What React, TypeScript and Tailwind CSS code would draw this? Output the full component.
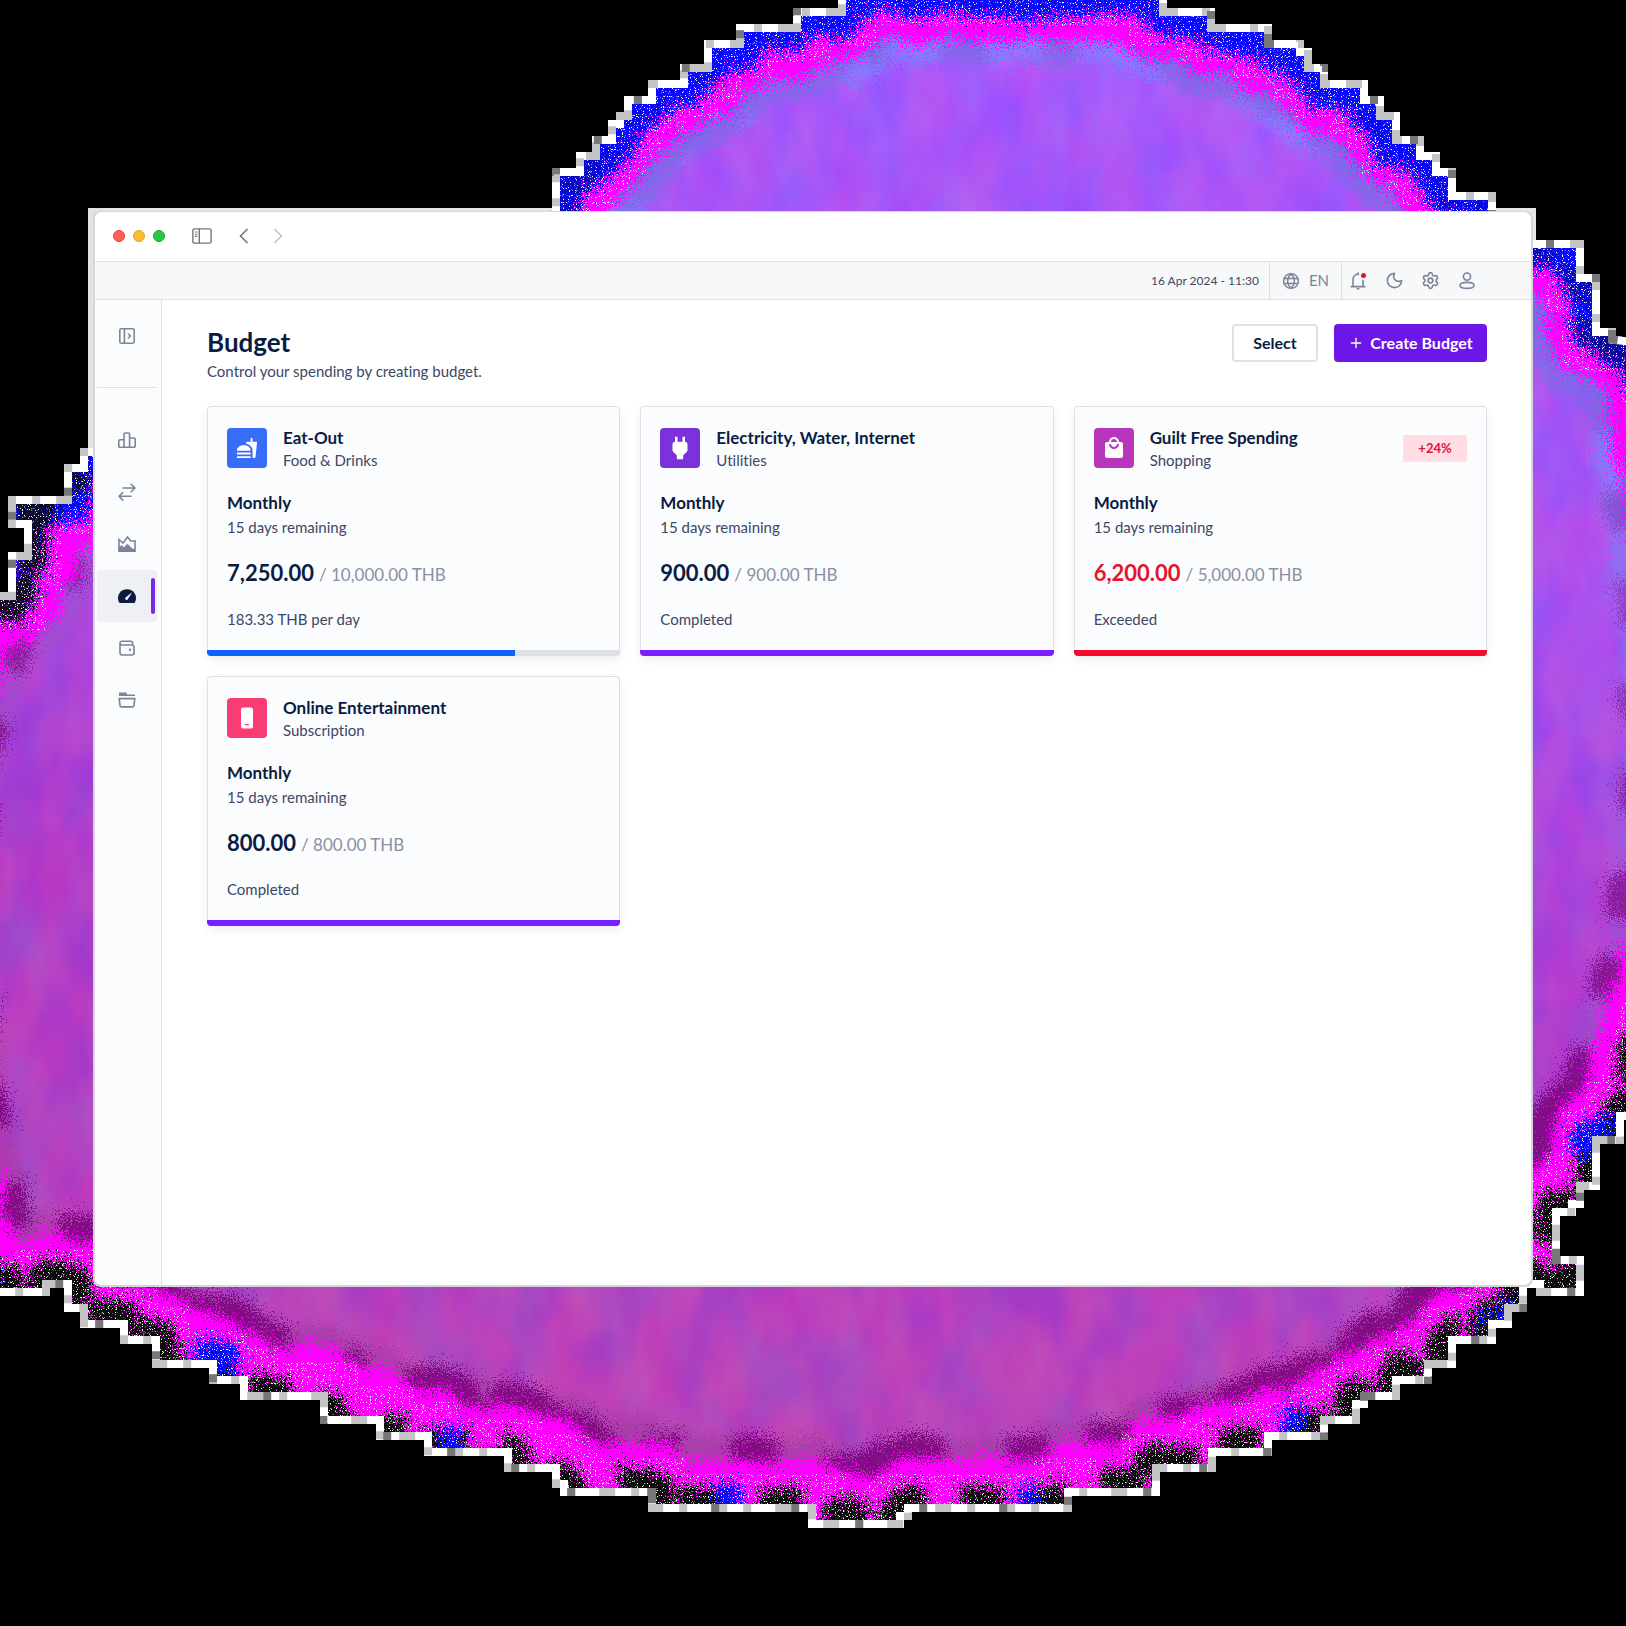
import React from "react";
import { MdFastfood, MdPower, MdLocalMall } from "react-icons/md";
import { Settings, Moon, Plus } from "lucide-react";

const BLOB =
  "M838 -12H1167V8H1215V24H1272V40H1304V48H1312V64H1328V80H1368V96H1384V112H1400V136H1424V152H1440V168H1456V192H1496V240H1584V274H1600V288V328H1616V336L1650 340L1690 560L1700 750L1680 950L1640 1078V1120H1624V1144H1600V1190H1584V1208H1576V1216H1560V1256H1584V1296H1536V1288H1527V1312H1512V1328H1496V1344H1456V1368H1432V1384H1400V1400H1368V1408H1360V1424H1328V1440H1272V1456H1216V1472H1160V1496H1072V1512H912V1520H904V1528H808V1512H648V1496H560V1488H552V1472H504V1456H424V1440H376V1424H320V1400H240V1384H209V1368H152V1344H120V1328H80V1312H64V1288H50V1296H0L-30 1296L-75 1080L-90 900L-75 740L-30 592H8V552H24V528H8V496H64V464H80V448H96V430L552 210V168H576V152H592V136H608V120H616V112H624V96H648V80H680V64H704V40H736V24H793V8H838Z";

function Backdrop() {
  return (
    <svg
      aria-hidden="true"
      className="absolute inset-x-0 top-0 w-full"
      viewBox="0 0 1626 1626"
      fill="none"
    >
      <defs>
        <clipPath id="blob">
          <path d={BLOB} />
        </clipPath>
        <linearGradient id="fill" gradientUnits="userSpaceOnUse" x1="1000" y1="0" x2="760" y2="1500">
          <stop offset="0" stopColor="#a85aff" />
          <stop offset="0.35" stopColor="#a852f0" />
          <stop offset="0.65" stopColor="#b03cc8" />
          <stop offset="1" stopColor="#b945b5" />
        </linearGradient>
        <linearGradient id="outer" gradientUnits="userSpaceOnUse" x1="900" y1="400" x2="820" y2="1000">
          <stop offset="0" stopColor="#0808ff" />
          <stop offset="0.4" stopColor="#0808ff" />
          <stop offset="0.7" stopColor="#ff00ff" />
          <stop offset="1" stopColor="#ff00ff" />
        </linearGradient>
        <linearGradient id="dark" gradientUnits="userSpaceOnUse" x1="900" y1="100" x2="820" y2="1000">
          <stop offset="0" stopColor="#0a0a0a" stopOpacity="0" />
          <stop offset="0.4" stopColor="#0a0a0a" stopOpacity="0.8" />
          <stop offset="1" stopColor="#0a0a0a" />
        </linearGradient>
        <linearGradient id="plum" gradientUnits="userSpaceOnUse" x1="900" y1="300" x2="820" y2="1000">
          <stop offset="0" stopColor="#7a007a" stopOpacity="0.15" />
          <stop offset="1" stopColor="#7a007a" stopOpacity="0.8" />
        </linearGradient>
        <linearGradient id="inner" gradientUnits="userSpaceOnUse" x1="1000" y1="300" x2="800" y2="1200">
          <stop offset="0" stopColor="#8080ff" />
          <stop offset="0.5" stopColor="#a050d8" />
          <stop offset="1" stopColor="#a83ca8" />
        </linearGradient>
        <filter id="dither" filterUnits="userSpaceOnUse" x="-100" y="-40" width="1840" height="1640" colorInterpolationFilters="sRGB">
          <feTurbulence type="fractalNoise" baseFrequency="0.8" numOctaves="2" seed="4" result="grain" />
          <feTurbulence type="fractalNoise" baseFrequency="0.03" numOctaves="1" seed="9" result="wave" />
          <feDisplacementMap in="SourceGraphic" in2="wave" scale="22" xChannelSelector="R" yChannelSelector="G" result="a" />
          <feDisplacementMap in="a" in2="grain" scale="50" xChannelSelector="R" yChannelSelector="G" />
        </filter>
        <filter id="blotch" filterUnits="userSpaceOnUse" x="0" y="0" width="1626" height="1626" colorInterpolationFilters="sRGB">
          <feTurbulence type="fractalNoise" baseFrequency="0.022 0.012" numOctaves="3" seed="12" />
          <feColorMatrix values="2.6 0 0 0 -0.65  0 1.4 0 0 -0.4  -1 0 0 0 1.35  0 0 0 0 0.1" />
        </filter>
        <filter id="specks" filterUnits="userSpaceOnUse" x="0" y="0" width="1626" height="1626" colorInterpolationFilters="sRGB">
          <feTurbulence type="fractalNoise" baseFrequency="0.85" numOctaves="1" seed="21" />
          <feColorMatrix values="0 0 0 0 1  0 0 0 0 1  0 0 0 0 1  14 0 0 0 -8.6" result="dots" />
          <feComposite in="dots" in2="SourceGraphic" operator="in" />
        </filter>
      </defs>
      <rect x="88" y="208" width="1448" height="32" fill="#e6e6e6" />
      <rect x="88" y="208" width="16" height="242" fill="#e2e2e4" />
      <g clipPath="url(#blob)">
        <path d={BLOB} fill="url(#fill)" />
        <rect width="1626" height="1626" filter="url(#blotch)" />
        <g filter="url(#dither)" strokeLinejoin="round">
          <path d={BLOB} stroke="url(#inner)" strokeWidth="150" strokeOpacity="0.8" />
          <path d={BLOB} stroke="url(#plum)" strokeWidth="150" strokeDasharray="44 56" />
          <path d={BLOB} stroke="#ff00ff" strokeWidth="104" />
          <path d={BLOB} stroke="url(#outer)" strokeWidth="58" />
          <path d={BLOB} stroke="url(#dark)" strokeWidth="54" strokeDasharray="44 34" />
          <path d={BLOB} stroke="#0808ff" strokeWidth="60" strokeDasharray="24 310" />
        </g>
        <path d={BLOB} stroke="#ffffff" strokeWidth="76" filter="url(#specks)" />
        <path d={BLOB} stroke="#ffffff" strokeWidth="16" />
        <path d={BLOB} stroke="#c4c4c4" strokeWidth="16" strokeDasharray="8 16 16 24" />
        <path d={BLOB} stroke="#777777" strokeWidth="16" strokeDasharray="8 72" />
      </g>
      <rect x="93" y="211" width="1440" height="1076" rx="8" fill="#d6d7dc" />
    </svg>
  );
}

function Icon({ children, size = 20, label }: { children: React.ReactNode; size?: number; label?: string }) {
  return (
    <svg
      width={size}
      height={size}
      viewBox="0 0 20 20"
      fill="none"
      stroke="currentColor"
      strokeWidth="1.6"
      strokeLinecap="round"
      strokeLinejoin="round"
      aria-label={label}
    >
      {children}
    </svg>
  );
}

const navItems = [
  {
    label: "Statistics",
    icon: (
      <Icon>
        <path d="M7 17.2V4.2a1.2 1.2 0 0 1 1.2-1.2h3.2a1.2 1.2 0 0 1 1.2 1.2v13M7 9.8H3A1.2 1.2 0 0 0 1.8 11v5A1.2 1.2 0 0 0 3 17.2h14a1.2 1.2 0 0 0 1.2-1.2V9.2A1.2 1.2 0 0 0 17 8h-4.4" />
      </Icon>
    ),
  },
  {
    label: "Transactions",
    icon: (
      <Icon>
        <path d="M6 6h12M14.2 2.2L18 6l-3.8 3.8M14 14.3H2M5.8 10.5L2 14.3l3.8 3.8" />
      </Icon>
    ),
  },
  {
    label: "Reports",
    icon: (
      <Icon>
        <path d="M2 5.5l4 3.5 4.5-6 3.7 4.2 3.8-.4v10.4H2z" strokeLinejoin="miter" />
        <path d="M2 17.2v-3.8l2.5-1.8L7 13.6l3.4-3.6 4.6 4.6 3 .8v1.8z" fill="currentColor" strokeWidth="0.5" />
      </Icon>
    ),
  },
  {
    label: "Budget",
    active: true,
    icon: (
      <Icon>
        <path d="M3 17a1.4 1.4 0 0 1-1-.7A9 9 0 1 1 18 16.3a1.4 1.4 0 0 1-1 .7z" fill="currentColor" stroke="none" />
        <path d="M8.6 11.4l6.6-5.2-4.6 7.2a1.4 1.4 0 1 1-2-2z" fill="#fff" stroke="none" />
      </Icon>
    ),
  },
  {
    label: "Wallet",
    icon: (
      <Icon>
        <path d="M3 5.2v9.6A2.2 2.2 0 0 0 5.2 17h9.6a2.2 2.2 0 0 0 2.2-2.2V9a2 2 0 0 0-2-2H4.8A1.8 1.8 0 0 1 3 5.2 2 2 0 0 1 5 3.2h8.8A1.8 1.8 0 0 1 15.6 5v2" />
        <circle cx="13" cy="11.8" r="1.2" fill="currentColor" stroke="none" />
      </Icon>
    ),
  },
  {
    label: "Categories",
    icon: (
      <Icon>
        <path d="M2 2.4h7l1.4 2H18v1.6H2z" fill="currentColor" stroke="none" />
        <path d="M2.2 8.6h15.6l-.9 7.2a1.3 1.3 0 0 1-1.3 1.1H4.4a1.3 1.3 0 0 1-1.3-1.1z" />
      </Icon>
    ),
  },
];

type Budget = {
  name: string;
  category: string;
  spent: string;
  limit: string;
  note: string;
  percent: number;
  tile: string;
  bar: string;
  over?: string;
  icon: React.ReactNode;
};

const budgets: Budget[] = [
  {
    name: "Eat-Out",
    category: "Food & Drinks",
    spent: "7,250.00",
    limit: "10,000.00 THB",
    note: "183.33 THB per day",
    percent: 74.5,
    tile: "bg-[#386dfa]",
    bar: "bg-[#0f62fe]",
    icon: <MdFastfood size={22} />,
  },
  {
    name: "Electricity, Water, Internet",
    category: "Utilities",
    spent: "900.00",
    limit: "900.00 THB",
    note: "Completed",
    percent: 100,
    tile: "bg-[#7c32d8]",
    bar: "bg-[#7a1fff]",
    icon: <MdPower size={30} />,
  },
  {
    name: "Guilt Free Spending",
    category: "Shopping",
    spent: "6,200.00",
    limit: "5,000.00 THB",
    note: "Exceeded",
    percent: 100,
    tile: "bg-[#b935bb]",
    bar: "bg-[#f80a2e]",
    over: "+24%",
    icon: <MdLocalMall size={24} />,
  },
  {
    name: "Online Entertainment",
    category: "Subscription",
    spent: "800.00",
    limit: "800.00 THB",
    note: "Completed",
    percent: 100,
    tile: "bg-[#f93c72]",
    bar: "bg-[#7a1fff]",
    icon: (
      <svg width="24" height="24" viewBox="0 0 24 24" fill="currentColor">
        <path
          fillRule="evenodd"
          d="M8 1.500h8A2 2 0 0 1 18 3.500v17a2 2 0 0 1-2 2H8a2 2 0 0 1-2-2v-17a2 2 0 0 1 2-2zM10 18v1.300h4V18z"
        />
      </svg>
    ),
  },
];

function BudgetCard({ budget }: { budget: Budget }) {
  return (
    <article className="flex flex-col overflow-hidden rounded bg-[#fbfcfe] shadow-[0_4px_10px_rgba(0,0,0,0.07)]">
      <div className="rounded-t border border-b-0 border-[#dcdfe4] px-[19px] pt-[18px] pb-[17px]">
        <div className="flex items-center">
          <div className={`flex size-10 shrink-0 items-center justify-center rounded text-white ${budget.tile}`}>
            {budget.icon}
          </div>
          <div className="ml-4 flex-1 pt-0.5">
            <h2 className="text-[17px] leading-[22px] font-bold text-[#0a1c42]">{budget.name}</h2>
            <p className="text-[15px] leading-[22px] text-[#3d4766]">{budget.category}</p>
          </div>
          {budget.over && (
            <span className="w-16 rounded-xs bg-[#ffdde2] text-center text-[13px] leading-[27px] font-bold text-[#e0143c]">
              {budget.over}
            </span>
          )}
        </div>
        <h3 className="mt-5 text-[17px] leading-6 font-bold text-[#0a1c42]">Monthly</h3>
        <p className="text-[15px] leading-6 text-[#3d4766]">15 days remaining</p>
        <p className="mt-[18px] flex items-baseline gap-[5px] leading-8">
          <span className={`text-[22px] font-bold ${budget.over ? "text-[#e8122f]" : "text-[#0a1c42]"}`}>
            {budget.spent}
          </span>
          <span className="text-[17px] text-[#8a90a2]">/ {budget.limit}</span>
        </p>
        <p className="mt-3.5 text-[15px] leading-7 text-[#3d4766]">{budget.note}</p>
      </div>
      <div
        className="mt-auto h-1.5 bg-[#dce0e5]"
        role="progressbar"
        aria-label={budget.name}
        aria-valuenow={budget.percent}
      >
        <div className={`h-full ${budget.bar}`} style={{ width: `${budget.percent}%` }} />
      </div>
    </article>
  );
}

export default function App() {
  return (
    <div className="relative min-h-screen overflow-hidden bg-black px-[94px] pt-[211px] pb-[340px] font-['Lato','Open_Sans',sans-serif] [font-variant-ligatures:none]">
      <Backdrop />
      <div className="relative flex min-h-[1075px] flex-col overflow-hidden rounded-lg border border-[#d6d7dc] bg-white">
        <div className="flex h-[50px] items-center border-b border-[#dfe2e5] px-[18px] pb-0.5">
          <div className="flex gap-2">
            <span className="size-3 rounded-full border border-[#e0443e] bg-[#ff5f57]" />
            <span className="size-3 rounded-full border border-[#dea123] bg-[#febc2e]" />
            <span className="size-3 rounded-full border border-[#1aab29] bg-[#28c840]" />
          </div>
          <button className="ml-[27px] text-[#747474]" aria-label="Toggle sidebar">
            <svg width="20" height="16" viewBox="0 0 20 16" fill="none" stroke="currentColor" strokeWidth="1.4">
              <rect x="0.9" y="0.9" width="18.2" height="14.2" rx="1.6" />
              <path d="M7.3 1v14" />
              <path d="M3 4h2.4M3 6.2h2.4M3 8.4h2.4" strokeWidth="1.1" />
            </svg>
          </button>
          <button className="ml-[26px] text-[#707070]" aria-label="Back">
            <svg width="12" height="16" viewBox="0 0 12 16" fill="none" stroke="currentColor" strokeWidth="1.5">
              <path d="M9.5 1L2.5 8l7 7" />
            </svg>
          </button>
          <button className="ml-[22px] text-[#c0c0c0]" aria-label="Forward">
            <svg width="12" height="16" viewBox="0 0 12 16" fill="none" stroke="currentColor" strokeWidth="1.5">
              <path d="M2.5 1l7 7-7 7" />
            </svg>
          </button>
        </div>

        <header className="flex h-[38px] items-stretch justify-end border-b border-[#dcdfe4] bg-[#f6f8fa] pr-[54px] text-[#7b8499]">
          <time className="flex items-center pr-[10px] text-xs text-[#3d4766]">16 Apr 2024 - 11:30</time>
          <button className="flex items-center gap-[9px] border-x border-[#dcdfe4] px-3 text-[15px]">
            <Icon size={18}>
              <circle cx="10" cy="10" r="8.2" />
              <path d="M10 1.8c-5 5-5 11.4 0 16.4 5-5 5-11.4 0-16.4zM2.4 7.2h15.2M2.4 12.8h15.2" />
            </Icon>
            EN
          </button>
          <div className="flex items-center gap-[17px] pl-1.5">
            <button aria-label="Notifications" className="relative">
              <Icon>
                <path d="M10.5 3.2A5 5 0 0 0 5 8.2v7.2M15 9.4v6M3.2 15.6h13.6M9.2 17.8h1.6M10 2v1.2" />
              </Icon>
              <span className="absolute top-0.5 right-0.5 size-[5px] rounded-full bg-[#e8122f]" />
            </button>
            <button aria-label="Dark mode">
              <Moon size={19} strokeWidth={2} />
            </button>
            <button aria-label="Settings">
              <Settings size={19} strokeWidth={2} />
            </button>
            <button aria-label="Account">
              <Icon>
                <circle cx="10" cy="5.6" r="3.6" />
                <path d="M3 14.6c0-2 3-3.2 7-3.2s7 1.2 7 3.2-3 2.8-7 2.8-7-.8-7-2.8z" />
              </Icon>
            </button>
          </div>
        </header>

        <div className="flex flex-1">
          <aside className="w-[67px] shrink-0 border-r border-[#dcdfe4] bg-[#fafcfe] text-[#7b8499]">
            <div className="mr-1 ml-0.5 flex h-[88px] justify-center border-b border-[#dcdfe4] pt-[26px]">
              <button aria-label="Expand menu" className="size-5">
                <Icon>
                  <rect x="2.8" y="2.8" width="14.4" height="14.4" rx="1.6" />
                  <path d="M7.4 3v14M11.4 8l2 2-2 2" />
                </Icon>
              </button>
            </div>
            <nav className="mt-[26px] mr-1 ml-0.5 flex flex-col" aria-label="Main">
              {navItems.map((item) => (
                <a
                  key={item.label}
                  href="#"
                  aria-label={item.label}
                  className={`relative flex h-[52px] items-center justify-center rounded ${
                    item.active ? "bg-[#eff0f4] text-[#0a1c42]" : ""
                  }`}
                >
                  {item.icon}
                  {item.active && <span className="absolute top-2 right-0.5 h-9 w-1 rounded-xs bg-[#7a2be6]" />}
                </a>
              ))}
            </nav>
          </aside>

          <main className="flex-1 pt-6 pr-11 pl-[45px]">
            <div className="flex items-start justify-between">
              <div>
                <h1 className="text-[26px] leading-9 font-bold text-[#0a1c42]">Budget</h1>
                <p className="text-[15px] leading-[22px] text-[#3d4766]">Control your spending by creating budget.</p>
              </div>
              <div className="flex gap-4">
                <button className="h-[38px] w-[86px] rounded border-2 border-[#dfe1e6] bg-white text-base leading-5 font-bold text-[#0a1c42]">
                  Select
                </button>
                <button className="flex h-[38px] w-[153px] items-center justify-center gap-1.5 rounded bg-[#6d16e8] text-base leading-5 font-bold text-white">
                  <Plus size={16} strokeWidth={2} />
                  Create Budget
                </button>
              </div>
            </div>
            <div className="mt-6 grid grid-cols-3 gap-5">
              {budgets.map((budget) => (
                <BudgetCard key={budget.name} budget={budget} />
              ))}
            </div>
          </main>
        </div>
      </div>
    </div>
  );
}
